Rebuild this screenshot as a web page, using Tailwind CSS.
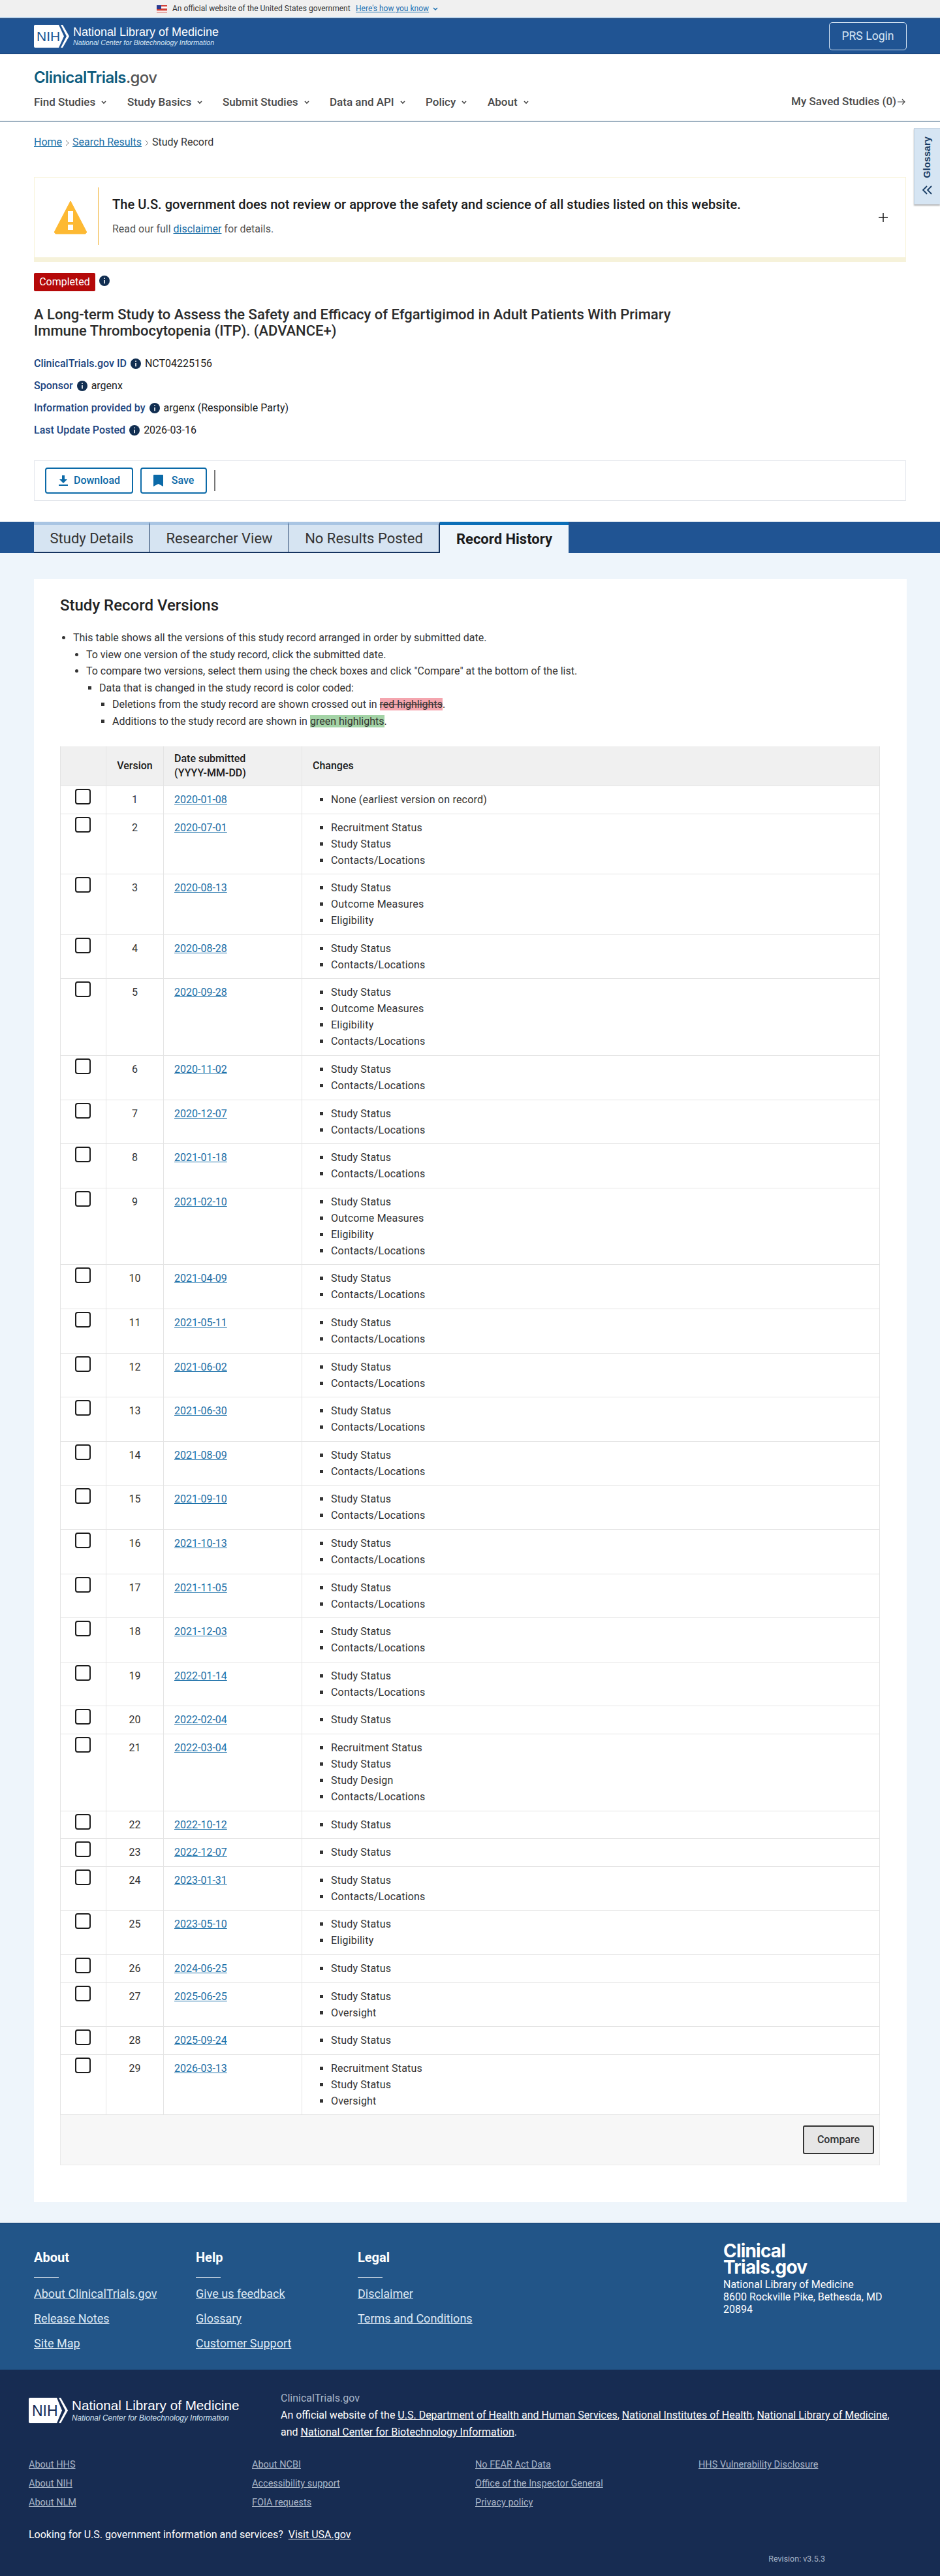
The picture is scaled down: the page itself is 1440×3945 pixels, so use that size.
<!DOCTYPE html>
<html lang="en">

<head>
    <meta charset="UTF-8" />
    <meta name="viewport" content="width=device-width, initial-scale=1.0" />
    <title>Study Record | ClinicalTrials.gov</title>
    <script src="https://cdn.jsdelivr.net/npm/@tailwindcss/browser@4"></script>
</head>

<body class="bg-white font-['Roboto',sans-serif] text-[16px] text-[#1b1b1b]">
    <!-- gov banner -->
    <div class="h-[28px] bg-[#f0f0f0] border-b-2 border-[#bcd6ee] flex items-center pl-[240px] text-[12px] text-[#333]">
        <svg width="16" height="11" viewBox="0 0 16 11" class="mr-2">
            <rect width="16" height="11" fill="#fff" />
            <path d="M0 .5h16M0 2.5h16M0 4.5h16M0 6.5h16M0 8.5h16M0 10.5h16" stroke="#d0352b" stroke-width="1" />
            <rect width="7" height="6" fill="#2b3a8f" />
        </svg>
        <span class="w-[281px]">An official website of the United States government</span>
        <a href="#" class="text-[#1a6fb0] underline">Here's how you know</a>
        <svg width="8" height="6" viewBox="0 0 8 6" class="ml-[6px] mt-[2px]" fill="none" stroke="#1a6fb0" stroke-width="1.5"><path d="M1 1l3 3 3-3" /></svg>
    </div>

    <!-- NLM header -->
    <header class="h-[55px] bg-[#205493] border-y border-[#173f73] flex items-center justify-between pl-[52px] pr-[51px]">
        <div class="flex items-center">
            <svg width="54" height="35" viewBox="0 0 54 35">
                <path d="M2 0H38L46 17.5 38 35H2A2 2 0 0 1 0 33V2A2 2 0 0 1 2 0Z" fill="#fff" />
                <path d="M41 0H44L54 17.5 44 35H41L50 17.5Z" fill="#fff" />
                <text x="4" y="25" font-family="Liberation Sans" font-size="21" fill="#205493">NIH</text>
            </svg>
            <div class="ml-[6px] font-['Liberation_Sans',sans-serif] text-white">
                <div class="text-[18px] leading-[20px]">National Library of Medicine</div>
                <div class="text-[10.7px] leading-[13px] italic text-[#d5e4f3]">National Center for Biotechnology Information</div>
            </div>
        </div>
        <a href="#" class="w-[119px] h-[43px] flex items-center justify-center border border-[#d5e4f3] rounded-[5px] text-[17.6px] text-[#d5e4f3]">PRS Login</a>
    </header>

    <!-- site nav -->
    <div class="h-[103px] border-b border-[#1d4a6e] px-[52px]">
        <div class="pt-[20px] h-[56px] text-[24px] leading-[32px] font-['Inter',sans-serif] tracking-[-0.6px]">
            <span class="font-semibold text-[#0e5c7e]">ClinicalTrials</span><span class="font-medium text-[#555]">.gov</span>
        </div>
        <nav class="flex items-center h-[36px] text-[17px] font-medium text-[#4a4a4a]">
            <a href="#" class="flex items-center w-[143px]">Find Studies<svg width="8" height="6" viewBox="0 0 8 6" class="ml-[9px]" fill="none" stroke="#4a4a4a" stroke-width="1.7"><path d="M1 1l3 3 3-3" /></svg></a>
            <a href="#" class="flex items-center w-[146px]">Study Basics<svg width="8" height="6" viewBox="0 0 8 6" class="ml-[9px]" fill="none" stroke="#4a4a4a" stroke-width="1.7"><path d="M1 1l3 3 3-3" /></svg></a>
            <a href="#" class="flex items-center w-[164px]">Submit Studies<svg width="8" height="6" viewBox="0 0 8 6" class="ml-[9px]" fill="none" stroke="#4a4a4a" stroke-width="1.7"><path d="M1 1l3 3 3-3" /></svg></a>
            <a href="#" class="flex items-center w-[147px]">Data and API<svg width="8" height="6" viewBox="0 0 8 6" class="ml-[9px]" fill="none" stroke="#4a4a4a" stroke-width="1.7"><path d="M1 1l3 3 3-3" /></svg></a>
            <a href="#" class="flex items-center w-[95px]">Policy<svg width="8" height="6" viewBox="0 0 8 6" class="ml-[9px]" fill="none" stroke="#4a4a4a" stroke-width="1.7"><path d="M1 1l3 3 3-3" /></svg></a>
            <a href="#" class="flex items-center">About<svg width="8" height="6" viewBox="0 0 8 6" class="ml-[9px]" fill="none" stroke="#4a4a4a" stroke-width="1.7"><path d="M1 1l3 3 3-3" /></svg></a>
            <a href="#" class="ml-auto flex items-center mr-[1px] mb-[2px]">My Saved Studies (0)<svg width="12" height="10" viewBox="0 0 12 10" class="ml-[2px]" fill="none" stroke="#4a4a4a" stroke-width="1.2"><path d="M0 5h11M7 1l4 4-4 4" /></svg></a>
        </nav>
    </div>

    <!-- glossary tab -->
    <div class="absolute right-0 top-[196px] w-[40px] h-[117px] bg-[#d6e5f3] border-l border-t border-[#c3d3e2] shadow-[0_2px_2px_rgba(0,0,0,0.3)] flex flex-col items-center">
        <span class="mt-[12px] [writing-mode:vertical-rl] rotate-180 font-['Liberation_Sans',sans-serif] font-bold text-[14.5px] tracking-[0.2px] text-[#163a63]">Glossary</span>
        <svg width="16" height="14" viewBox="0 0 16 14" class="mt-[11px]" fill="none" stroke="#163a63" stroke-width="1.8"><path d="M7 1L1 7l6 6M14 1L8 7l6 6" /></svg>
    </div>

    <main>
        <div class="px-[52px]">
            <!-- breadcrumb -->
            <div class="pt-[20px] h-[85px] leading-[24px] flex items-start text-[#333]">
                <a href="#" class="text-[#1a6fa8] underline">Home</a>
                <svg width="6" height="10" viewBox="0 0 6 10" class="mx-[5px] mt-[8px]" fill="none" stroke="#777" stroke-width="1"><path d="M1 1l4 4-4 4" /></svg>
                <a href="#" class="text-[#1a6fa8] underline">Search Results</a>
                <svg width="6" height="10" viewBox="0 0 6 10" class="mx-[5px] mt-[8px]" fill="none" stroke="#777" stroke-width="1"><path d="M1 1l4 4-4 4" /></svg>
                <span>Study Record</span>
            </div>

            <!-- disclaimer alert -->
            <div class="h-[130px] border border-[#f7f3d9] border-b-[7px] border-b-[#f6f2da] flex items-center pl-[29px] pr-[26px]">
                <svg width="52" height="52" viewBox="0 0 52 52">
                    <path d="M26 1L50 47a2.5 2.5 0 0 1-2 4H4a2.5 2.5 0 0 1-2-4Z" fill="#fdb933" stroke="#fdb933" stroke-linejoin="round" />
                    <rect x="22" y="16" width="8" height="17" fill="#fff" />
                    <rect x="22" y="37" width="8" height="8" fill="#fff" />
                </svg>
                <div class="ml-[16px] w-px h-[88px] bg-[#f2b53c] mb-[5px]"></div>
                <div class="ml-[21px] mb-[5px]">
                    <div class="text-[20.1px] leading-[28px] font-medium text-[#1b1b1b]">The U.S. government does not review or approve the safety and science of all studies listed on this website.</div>
                    <div class="mt-[12px] leading-[24px] text-[#555]">Read our full <a href="#" class="text-[#1a6fa8] underline">disclaimer</a> for details.</div>
                </div>
                <svg width="16" height="16" viewBox="0 0 16 16" class="ml-auto" fill="none" stroke="#1b1b1b" stroke-width="1.5"><path d="M8 1v14M1 8h14" /></svg>
            </div>

            <!-- study header -->
            <div class="mt-[17px] flex items-start">
                <span class="h-[28px] w-[94px] bg-[#b50909] rounded-[2px] text-white flex items-center justify-center">Completed</span>
                <svg width="16" height="16" viewBox="0 0 16 16" class="ml-[6px] mt-[4px]"><circle cx="8" cy="8" r="8" fill="#112e51" /><path d="M8 3.5v1.6M8 7v5.2" stroke="#fff" stroke-width="1.6" /></svg>
            </div>
            <h1 class="mt-[23px] w-[1000px] text-[22px] leading-[25px] font-medium text-[#2b2b2b]">A Long-term Study to Assess the Safety and Efficacy of Efgartigimod in Adult Patients With Primary Immune Thrombocytopenia (ITP). (ADVANCE+)</h1>

            <dl class="mt-[21px] [&_div]:flex [&_div]:items-center [&_div]:h-[34px] [&_dt]:font-medium [&_dt]:text-[#1a4480] [&_svg]:mx-[6px]">
                <div><dt>ClinicalTrials.gov ID</dt><svg width="16" height="16" viewBox="0 0 16 16"><circle cx="8" cy="8" r="8" fill="#112e51" /><path d="M8 3.5v1.6M8 7v5.2" stroke="#fff" stroke-width="1.6" /></svg><dd>NCT04225156</dd></div>
                <div><dt>Sponsor</dt><svg width="16" height="16" viewBox="0 0 16 16"><circle cx="8" cy="8" r="8" fill="#112e51" /><path d="M8 3.5v1.6M8 7v5.2" stroke="#fff" stroke-width="1.6" /></svg><dd>argenx</dd></div>
                <div><dt>Information provided by</dt><svg width="16" height="16" viewBox="0 0 16 16"><circle cx="8" cy="8" r="8" fill="#112e51" /><path d="M8 3.5v1.6M8 7v5.2" stroke="#fff" stroke-width="1.6" /></svg><dd>argenx (Responsible Party)</dd></div>
                <div><dt>Last Update Posted</dt><svg width="16" height="16" viewBox="0 0 16 16"><circle cx="8" cy="8" r="8" fill="#112e51" /><path d="M8 3.5v1.6M8 7v5.2" stroke="#fff" stroke-width="1.6" /></svg><dd>2026-03-16</dd></div>
            </dl>

            <!-- actions -->
            <div class="mt-[29px] h-[62px] border border-[#e4e7ec] flex items-center pl-[16px]">
                <button class="w-[135px] h-[40px] border-2 border-[#0b6aa8] rounded-[4px] text-[#0b6aa8] font-medium flex items-center justify-center">
                    <svg width="16" height="16" viewBox="0 0 16 16" class="mr-[8px]" fill="#0b6aa8"><path d="M6 0h4v6h4L8 12 2 6h4Z" /><rect x="1" y="14" width="14" height="2" /></svg>Download
                </button>
                <button class="ml-[11px] w-[102px] h-[40px] border-2 border-[#0b6aa8] rounded-[4px] text-[#0b6aa8] font-medium flex items-center justify-center">
                    <svg width="15" height="18" viewBox="0 0 15 18" class="mr-[13px]" fill="#0b6aa8"><path d="M1 0h13a1 1 0 0 1 1 1v17l-7.5-4L0 18V1a1 1 0 0 1 1-1Z" /></svg>Save
                </button>
                <div class="ml-[11px] w-[2px] h-[32px] bg-[#777]"></div>
            </div>
        </div>

        <!-- tabs -->
        <div class="mt-[32px] h-[48px] bg-[#205493] flex pl-[52px]">
            <a href="#" class="w-[178px] bg-[#d6e4f2] border-t-[5px] border-t-[#a9c5e3] border-b-2 border-b-[#14335f] border-r border-r-[#14335f] flex items-center justify-center text-[22px] text-[#333]">Study Details</a>
            <a href="#" class="w-[213px] bg-[#d6e4f2] border-t-[5px] border-t-[#a9c5e3] border-b-2 border-b-[#14335f] border-r border-r-[#14335f] flex items-center justify-center text-[22px] text-[#333]">Researcher View</a>
            <a href="#" class="w-[231px] bg-[#d6e4f2] border-t-[5px] border-t-[#a9c5e3] border-b-2 border-b-[#14335f] border-r-2 border-r-[#14335f] flex items-center justify-center text-[22px] text-[#333]">No Results Posted</a>
            <a href="#" class="w-[197px] bg-[#eef5fb] border-t-[5px] border-t-[#0b6fb8] flex items-center justify-center text-[22px] font-bold text-[#1b1b1b]">Record History</a>
        </div>

        <!-- record history -->
        <div class="bg-[#eef5fb] pt-[40px] pb-[32px] pl-[52px] pr-[51px]">
            <section class="bg-white h-[2485px] px-[40px] pt-[25px]">
                <h2 class="text-[24px] leading-[30px] font-medium text-[#222]">Study Record Versions</h2>
                <ul class="mt-[22px] list-disc pl-[20px] leading-[25.6px] text-[#333]">
                    <li>This table shows all the versions of this study record arranged in order by submitted date.
                        <ul class="list-disc pl-[20px]">
                            <li>To view one version of the study record, click the submitted date.</li>
                            <li>To compare two versions, select them using the check boxes and click "Compare" at the bottom of the list.
                                <ul class="list-[square] pl-[20px]">
                                    <li>Data that is changed in the study record is color coded:
                                        <ul class="list-[square] pl-[20px]">
                                            <li>Deletions from the study record are shown crossed out in <span class="bg-[#f4a5ae] line-through">red highlights</span>.</li>
                                            <li>Additions to the study record are shown in <span class="bg-[#a3d3a6]">green highlights</span>.</li>
                                        </ul>
                                    </li>
                                </ul>
                            </li>
                        </ul>
                    </li>
                </ul>

                <table class="mt-[25px] w-[1256px] table-fixed border-collapse border-x border-[#e4e4e4] [&_td]:border-x [&_td]:border-[#e4e4e4] [&_td]:align-top [&_td]:pt-[8px] [&_td]:pb-[8.6px] [&_tr]:border-b [&_tr]:border-[#e4e4e4] [&_td]:leading-[25px] [&_td:first-child]:pt-[4px] [&_td:first-child]:pb-0 [&_td:first-child]:pl-[22px] [&_td:nth-child(2)]:text-center [&_td:nth-child(3)]:pl-[16px] [&_td:nth-child(4)]:pl-[44px] [&_td]:text-[#333] [&_td_a]:text-[#1a6fa8] [&_td_a]:underline [&_ul]:list-[square] [&_li]:tracking-[0.2px] [&_input]:appearance-none [&_input]:block [&_input]:w-[24px] [&_input]:h-[24px] [&_input]:border-2 [&_input]:border-[#1b1b1b] [&_input]:rounded-[4px]">
                    <colgroup>
                        <col class="w-[70px]" />
                        <col class="w-[88px]" />
                        <col class="w-[212px]" />
                        <col />
                    </colgroup>
                    <thead class="bg-[#f0f0f0]">
                        <tr class="h-[61px] text-left font-medium [&_th]:font-medium [&_th]:leading-[22px] [&_th]:border-x [&_th]:border-[#e4e4e4]">
                            <th></th>
                            <th class="text-center">Version</th>
                            <th class="pl-[16px]">Date submitted<br />(YYYY-MM-DD)</th>
                            <th class="pl-[16px]">Changes</th>
                        </tr>
                    </thead>
                    <tbody>
                        <tr><td><input type="checkbox" /></td><td>1</td><td><a href="#">2020-01-08</a></td><td><ul><li>None (earliest version on record)</li></ul></td></tr>
                        <tr><td><input type="checkbox" /></td><td>2</td><td><a href="#">2020-07-01</a></td><td><ul><li>Recruitment Status</li><li>Study Status</li><li>Contacts/Locations</li></ul></td></tr>
                        <tr><td><input type="checkbox" /></td><td>3</td><td><a href="#">2020-08-13</a></td><td><ul><li>Study Status</li><li>Outcome Measures</li><li>Eligibility</li></ul></td></tr>
                        <tr><td><input type="checkbox" /></td><td>4</td><td><a href="#">2020-08-28</a></td><td><ul><li>Study Status</li><li>Contacts/Locations</li></ul></td></tr>
                        <tr><td><input type="checkbox" /></td><td>5</td><td><a href="#">2020-09-28</a></td><td><ul><li>Study Status</li><li>Outcome Measures</li><li>Eligibility</li><li>Contacts/Locations</li></ul></td></tr>
                        <tr><td><input type="checkbox" /></td><td>6</td><td><a href="#">2020-11-02</a></td><td><ul><li>Study Status</li><li>Contacts/Locations</li></ul></td></tr>
                        <tr><td><input type="checkbox" /></td><td>7</td><td><a href="#">2020-12-07</a></td><td><ul><li>Study Status</li><li>Contacts/Locations</li></ul></td></tr>
                        <tr><td><input type="checkbox" /></td><td>8</td><td><a href="#">2021-01-18</a></td><td><ul><li>Study Status</li><li>Contacts/Locations</li></ul></td></tr>
                        <tr><td><input type="checkbox" /></td><td>9</td><td><a href="#">2021-02-10</a></td><td><ul><li>Study Status</li><li>Outcome Measures</li><li>Eligibility</li><li>Contacts/Locations</li></ul></td></tr>
                        <tr><td><input type="checkbox" /></td><td>10</td><td><a href="#">2021-04-09</a></td><td><ul><li>Study Status</li><li>Contacts/Locations</li></ul></td></tr>
                        <tr><td><input type="checkbox" /></td><td>11</td><td><a href="#">2021-05-11</a></td><td><ul><li>Study Status</li><li>Contacts/Locations</li></ul></td></tr>
                        <tr><td><input type="checkbox" /></td><td>12</td><td><a href="#">2021-06-02</a></td><td><ul><li>Study Status</li><li>Contacts/Locations</li></ul></td></tr>
                        <tr><td><input type="checkbox" /></td><td>13</td><td><a href="#">2021-06-30</a></td><td><ul><li>Study Status</li><li>Contacts/Locations</li></ul></td></tr>
                        <tr><td><input type="checkbox" /></td><td>14</td><td><a href="#">2021-08-09</a></td><td><ul><li>Study Status</li><li>Contacts/Locations</li></ul></td></tr>
                        <tr><td><input type="checkbox" /></td><td>15</td><td><a href="#">2021-09-10</a></td><td><ul><li>Study Status</li><li>Contacts/Locations</li></ul></td></tr>
                        <tr><td><input type="checkbox" /></td><td>16</td><td><a href="#">2021-10-13</a></td><td><ul><li>Study Status</li><li>Contacts/Locations</li></ul></td></tr>
                        <tr><td><input type="checkbox" /></td><td>17</td><td><a href="#">2021-11-05</a></td><td><ul><li>Study Status</li><li>Contacts/Locations</li></ul></td></tr>
                        <tr><td><input type="checkbox" /></td><td>18</td><td><a href="#">2021-12-03</a></td><td><ul><li>Study Status</li><li>Contacts/Locations</li></ul></td></tr>
                        <tr><td><input type="checkbox" /></td><td>19</td><td><a href="#">2022-01-14</a></td><td><ul><li>Study Status</li><li>Contacts/Locations</li></ul></td></tr>
                        <tr><td><input type="checkbox" /></td><td>20</td><td><a href="#">2022-02-04</a></td><td><ul><li>Study Status</li></ul></td></tr>
                        <tr><td><input type="checkbox" /></td><td>21</td><td><a href="#">2022-03-04</a></td><td><ul><li>Recruitment Status</li><li>Study Status</li><li>Study Design</li><li>Contacts/Locations</li></ul></td></tr>
                        <tr><td><input type="checkbox" /></td><td>22</td><td><a href="#">2022-10-12</a></td><td><ul><li>Study Status</li></ul></td></tr>
                        <tr><td><input type="checkbox" /></td><td>23</td><td><a href="#">2022-12-07</a></td><td><ul><li>Study Status</li></ul></td></tr>
                        <tr><td><input type="checkbox" /></td><td>24</td><td><a href="#">2023-01-31</a></td><td><ul><li>Study Status</li><li>Contacts/Locations</li></ul></td></tr>
                        <tr><td><input type="checkbox" /></td><td>25</td><td><a href="#">2023-05-10</a></td><td><ul><li>Study Status</li><li>Eligibility</li></ul></td></tr>
                        <tr><td><input type="checkbox" /></td><td>26</td><td><a href="#">2024-06-25</a></td><td><ul><li>Study Status</li></ul></td></tr>
                        <tr><td><input type="checkbox" /></td><td>27</td><td><a href="#">2025-06-25</a></td><td><ul><li>Study Status</li><li>Oversight</li></ul></td></tr>
                        <tr><td><input type="checkbox" /></td><td>28</td><td><a href="#">2025-09-24</a></td><td><ul><li>Study Status</li></ul></td></tr>
                        <tr><td><input type="checkbox" /></td><td>29</td><td><a href="#">2026-03-13</a></td><td><ul><li>Recruitment Status</li><li>Study Status</li><li>Oversight</li></ul></td></tr>
                    </tbody>
                </table>
                <div class="w-[1256px] h-[77px] bg-[#f7f7f7] border border-t-0 border-[#e9e9e9] flex items-center justify-end pr-[8px]">
                    <button class="w-[109px] h-[44px] bg-[#e6e6e6] border-2 border-[#333] rounded-[3px] font-medium text-[#333]">Compare</button>
                </div>
            </section>
        </div>
    </main>

    <!-- footer -->
    <footer>
        <div class="h-[225px] bg-[#225588] border-t border-[#173f73] pl-[52px] flex text-[#dde9f5]">
            <div class="w-[248px] pt-[38px]">
                <h3 class="text-[20px] leading-[28px] font-bold text-white">About</h3>
                <div class="mt-[16px] w-[38px] h-px bg-white"></div>
                <ul class="mt-[11px] text-[18px] [&_li]:h-[38px] [&_li]:leading-[28px] [&_a]:underline">
                    <li><a href="#">About ClinicalTrials.gov</a></li>
                    <li><a href="#">Release Notes</a></li>
                    <li><a href="#">Site Map</a></li>
                </ul>
            </div>
            <div class="w-[248px] pt-[38px]">
                <h3 class="text-[20px] leading-[28px] font-bold text-white">Help</h3>
                <div class="mt-[16px] w-[38px] h-px bg-white"></div>
                <ul class="mt-[11px] text-[18px] [&_li]:h-[38px] [&_li]:leading-[28px] [&_a]:underline">
                    <li><a href="#">Give us feedback</a></li>
                    <li><a href="#">Glossary</a></li>
                    <li><a href="#">Customer Support</a></li>
                </ul>
            </div>
            <div class="w-[248px] pt-[38px]">
                <h3 class="text-[20px] leading-[28px] font-bold text-white">Legal</h3>
                <div class="mt-[16px] w-[38px] h-px bg-white"></div>
                <ul class="mt-[11px] text-[18px] [&_li]:h-[38px] [&_li]:leading-[28px] [&_a]:underline">
                    <li><a href="#">Disclaimer</a></li>
                    <li><a href="#">Terms and Conditions</a></li>
                </ul>
            </div>
            <div class="ml-auto mr-[52px] w-[280px] pt-[30px] text-white">
                <div class="text-[28px] leading-[25px] font-bold font-['Inter',sans-serif] tracking-[-0.8px]">Clinical<br />Trials.gov</div>
                <div class="mt-[4px] leading-[19px]">National Library of Medicine<br />8600 Rockville Pike, Bethesda, MD<br />20894</div>
            </div>
        </div>

        <div class="h-[316px] bg-[#172c52] pl-[44px] pr-[60px]">
            <div class="flex pt-[31px] h-[131px]">
                <div class="flex items-start w-[386px] mt-[12px]">
                    <svg width="60" height="39" viewBox="0 0 60 39">
                        <path d="M2 0H43L51 19.5 43 39H2A2 2 0 0 1 0 37V2A2 2 0 0 1 2 0Z" fill="#fff" />
                        <path d="M46 0H49L60 19.5 49 39H46L56 19.5Z" fill="#fff" />
                        <text x="5" y="28" font-family="Liberation Sans" font-size="23" fill="#172c52">NIH</text>
                    </svg>
                    <div class="ml-[6px] font-['Liberation_Sans',sans-serif] text-white">
                        <div class="text-[20.7px] leading-[24px]">National Library of Medicine</div>
                        <div class="text-[11.9px] leading-[14px] italic text-[#d5e4f3]">National Center for Biotechnology Information</div>
                    </div>
                </div>
                <div class="text-white leading-[26px]">
                    <div class="text-[#a9b6c8]">ClinicalTrials.gov</div>
                    <div>An official website of the <a href="#" class="underline">U.S. Department of Health and Human Services</a>, <a href="#" class="underline">National Institutes of Health</a>, <a href="#" class="underline">National Library of Medicine</a>,<br />and <a href="#" class="underline">National Center for Biotechnology Information</a>.</div>
                </div>
            </div>
            <div class="grid grid-cols-[342px_342px_342px_1fr] text-[14.5px] text-[#a9b6c8] [&_a]:underline [&_li]:h-[29px] [&_li]:leading-[29px]">
                <ul><li><a href="#">About HHS</a></li><li><a href="#">About NIH</a></li><li><a href="#">About NLM</a></li></ul>
                <ul><li><a href="#">About NCBI</a></li><li><a href="#">Accessibility support</a></li><li><a href="#">FOIA requests</a></li></ul>
                <ul><li><a href="#">No FEAR Act Data</a></li><li><a href="#">Office of the Inspector General</a></li><li><a href="#">Privacy policy</a></li></ul>
                <ul><li><a href="#">HHS Vulnerability Disclosure</a></li></ul>
            </div>
            <div class="mt-[22px] leading-[26px] text-white">Looking for U.S. government information and services? <a href="#" class="ml-[4px] underline">Visit USA.gov</a></div>
            <div class="mt-[15px] pr-[116px] text-right text-[12.5px] leading-[18px] text-[#a9b6c8]">Revision: v3.5.3</div>
        </div>
    </footer>
</body>

</html>
